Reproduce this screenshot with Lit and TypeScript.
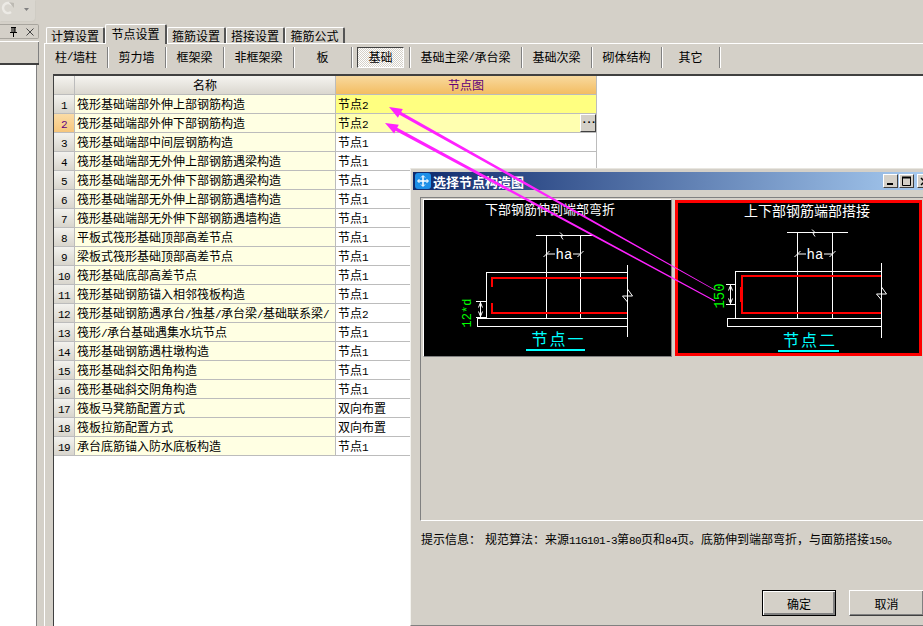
import { LitElement, html, css, svg } from 'lit';
import { customElement } from 'lit/decorators.js';

// wrap ascii runs so they get the narrow 6px latin, the CJK stays at 12px
const mixed = (text: string) =>
    text.split(/([\x21-\x7e]+)/).map((part, i) => (i % 2 ? html`<span class="latin">${part}</span>` : part));

const ROWS = [
    ['筏形基础端部外伸上部钢筋构造', '节点2'],
    ['筏形基础端部外伸下部钢筋构造', '节点2'],
    ['筏形基础端部中间层钢筋构造', '节点1'],
    ['筏形基础端部无外伸上部钢筋遇梁构造', '节点1'],
    ['筏形基础端部无外伸下部钢筋遇梁构造', '节点1'],
    ['筏形基础端部无外伸上部钢筋遇墙构造', '节点1'],
    ['筏形基础端部无外伸下部钢筋遇墙构造', '节点1'],
    ['平板式筏形基础顶部高差节点', '节点1'],
    ['梁板式筏形基础顶部高差节点', '节点1'],
    ['筏形基础底部高差节点', '节点1'],
    ['筏形基础钢筋锚入相邻筏板构造', '节点1'],
    ['筏形基础钢筋遇承台/独基/承台梁/基础联系梁/', '节点2'],
    ['筏形/承台基础遇集水坑节点', '节点1'],
    ['筏形基础钢筋遇柱墩构造', '节点1'],
    ['筏形基础斜交阳角构造', '节点1'],
    ['筏形基础斜交阴角构造', '节点1'],
    ['筏板马凳筋配置方式', '双向布置'],
    ['筏板拉筋配置方式', '双向布置'],
    ['承台底筋锚入防水底板构造', '节点1'],
];

const TABS: [string, number][] = [
    ['计算设置', 59], ['节点设置', 62], ['箍筋设置', 59], ['搭接设置', 59], ['箍筋公式', 60],
];

const TOOLS_LEFT: [string, number][] = [
    ['柱/墙柱', 63], ['剪力墙', 58], ['框架梁', 58], ['非框架梁', 70], ['板', 58],
];
const TOOLS_RIGHT: [string, number][] = [
    ['基础主梁/承台梁', 112], ['基础次梁', 70], ['砌体结构', 70], ['其它', 58],
];

// tapered arrow: tip at (x1,y1), tail at (x2,y2)
const arrow = (x1: number, y1: number, x2: number, y2: number) => {
    const len = Math.hypot(x2 - x1, y2 - y1);
    const ux = (x2 - x1) / len, uy = (y2 - y1) / len;
    const nx = -uy, ny = ux;
    const head = 13;
    const bx = x1 + ux * head, by = y1 + uy * head;
    const p = (x: number, y: number) => `${x.toFixed(1)},${y.toFixed(1)}`;
    const pts = [
        p(x1, y1),
        p(bx + nx * 5, by + ny * 5),
        p(bx + nx * 1.7, by + ny * 1.7),
        p(x2 + nx * 0.4, y2 + ny * 0.4),
        p(x2 - nx * 0.4, y2 - ny * 0.4),
        p(bx - nx * 1.7, by - ny * 1.7),
        p(bx - nx * 5, by - ny * 5),
    ];
    return svg`<polygon points=${pts.join(' ')} fill="#ff22ff"></polygon>`;
};

interface Detail {
    title: string; titleX: number; titleY: number; titleSize: number;
    topY: number; topL: number; topR: number; tickX: number;
    v1: number; v2: number; haX: number; haY: number;
    boxL: number; boxT: number; right: number; boxB: number; baseL: number; baseB: number;
    rightT: number; rightB: number;
    dimX: number; dimT: number; dimB: number;
    label: string; labelX: number; labelY: number; labelSize: number;
    node: string; nodeX: number; nodeY: number; ulL: number; ulR: number; ulY: number;
    red: string; redThick?: string;
}

const drawDetail = (d: Detail) => svg`
    <text x=${d.titleX} y=${d.titleY} text-anchor="middle" fill="#fff" font-size=${d.titleSize}>${d.title}</text>
    <g stroke="#fff" stroke-width="1" fill="none" shape-rendering="crispEdges">
        <path d="M${d.topL} ${d.topY}H${d.topR}M${d.v1} ${d.topY}V${d.boxB}M${d.v2} ${d.topY}V${d.boxB}"></path>
        <rect x=${d.boxL} y=${d.boxT} width=${d.right - d.boxL} height=${d.boxB - d.boxT}></rect>
        <rect x=${d.baseL} y=${d.boxB} width=${d.right - d.baseL} height=${d.baseB - d.boxB}></rect>
        <path d="M${d.right} ${d.rightT}V${d.rightB}"></path>
        <path d="M${d.dimX} ${d.dimT}V${d.dimB}M${d.dimX - 5} ${d.dimT}H${d.dimX + 5}M${d.dimX - 5} ${d.dimB}H${d.dimX + 5}"></path>
    </g>
    <g stroke="#fff" stroke-width="1" fill="none">
        <path d="M${d.tickX - 2} ${d.topY - 3}L${d.tickX + 1} ${d.topY}L${d.tickX - 1} ${d.topY + 1}L${d.tickX + 1} ${d.topY + 4}"></path>
        <path d="M${d.v1 - 3} ${d.haY + 3}L${d.v1 + 3} ${d.haY - 3}M${d.v2 - 3} ${d.haY + 3}L${d.v2 + 3} ${d.haY - 3}"></path>
        <path d="M${d.v1} ${d.haY}H${d.haX - 9}M${d.haX + 9} ${d.haY}H${d.v2}"></path>
        <path d="M${d.right - 5} ${d.rightT + 31}L${d.right + 5} ${d.rightT + 31}L${d.right} ${d.rightT + 24}M${d.right - 5} ${d.rightT + 31}L${d.right} ${d.rightT + 37}"></path>
        <path d="M${d.dimX - 2} ${d.dimT + 6}L${d.dimX} ${d.dimT + 1}L${d.dimX + 2} ${d.dimT + 6}M${d.dimX - 2} ${d.dimB - 6}L${d.dimX} ${d.dimB - 1}L${d.dimX + 2} ${d.dimB - 6}"></path>
    </g>
    <text x=${d.haX} y=${d.haY + 5} text-anchor="middle" fill="#fff" font-size="14" font-family="Liberation Mono, monospace">ha</text>
    <path d=${d.red} stroke="#ff0000" stroke-width="2" fill="none" shape-rendering="crispEdges"></path>
    ${d.redThick ? svg`<path d=${d.redThick} stroke="#ff0000" stroke-width="3" fill="none" shape-rendering="crispEdges"></path>` : ''}
    <text transform="translate(${d.labelX} ${d.labelY}) rotate(-90)" x="0" y="0" text-anchor="middle" dominant-baseline="central"
        fill="#00ff00" font-size=${d.labelSize} font-family="Liberation Mono, monospace">${d.label}</text>
    <text x=${d.nodeX} y=${d.nodeY} text-anchor="middle" fill="#00ffff" font-size="16" letter-spacing="2">${d.node}</text>
    <path d="M${d.ulL} ${d.ulY}H${d.ulR}" stroke="#00ffff" stroke-width="2" shape-rendering="crispEdges"></path>
`;

const DETAIL_ONE: Detail = {
    title: '下部钢筋伸到端部弯折', titleX: 127, titleY: 15, titleSize: 13,
    topY: 36.5, topL: 113, topR: 170, tickX: 139,
    v1: 123.5, v2: 157.5, haX: 141, haY: 55,
    boxL: 63.5, boxT: 73.5, right: 204.5, boxB: 119.5, baseL: 54.5, baseB: 127.5,
    rightT: 66, rightB: 138,
    dimX: 57.5, dimT: 102.5, dimB: 118.5,
    label: '12*d', labelX: 45, labelY: 114, labelSize: 12,
    node: '节点一', nodeX: 135.5, nodeY: 146, ulL: 103, ulR: 162, ulY: 151,
    red: 'M69 88V79H204M69 104V114H204',
};

const DETAIL_TWO: Detail = {
    title: '上下部钢筋端部搭接', titleX: 132, titleY: 16, titleSize: 14,
    topY: 32.5, topL: 112, topR: 173, tickX: 139,
    v1: 122.5, v2: 157.5, haX: 140, haY: 54,
    boxL: 60.5, boxT: 71.5, right: 206.5, boxB: 118.5, baseL: 52.5, baseB: 126.5,
    rightT: 63, rightB: 138,
    dimX: 55.5, dimT: 84.5, dimB: 104.5,
    label: '150', labelX: 44.5, labelY: 96, labelSize: 14,
    node: '节点二', nodeX: 135, nodeY: 146, ulL: 103, ulR: 164, ulY: 151,
    red: 'M206 76H67V113H206', redThick: 'M66.5 87V102',
};

@customElement('app-root')
export class AppRoot extends LitElement {
    static styles = css`
    :host {
        display: block;
        width: 923px;
        height: 626px;
        position: relative;
        overflow: hidden;
        background: #d4d0c8;
        color: #000;
        font-family: "Noto Sans CJK SC", sans-serif;
        font-size: 12px;
    }

    .latin {
        font-family: "Liberation Mono", monospace;
        font-size: 11px;
        letter-spacing: -0.6px;
    }

    .quick {
        height: 24px;
    }

    .quick-bar {
        width: 35px;
        height: 21px;
        background: #d9d6cf;
        border-radius: 0 0 4px 0;
        box-shadow: 1px 1px 0 #cfccc4;
    }

    .quick-bar svg {
        display: block;
    }

    .body {
        display: flex;
        height: 602px;
    }

    .dock {
        width: 39px;
        flex: none;
        display: flex;
        flex-direction: column;
    }

    .dock-head {
        height: 15px;
        border: 1px solid #a8a59e;
        border-left: none;
        border-radius: 0 2px 2px 0;
        display: flex;
        align-items: center;
        justify-content: flex-end;
        gap: 8px;
        padding-right: 4px;
        box-sizing: border-box;
    }

    .dock-tab {
        margin-top: 2px;
        height: 24px;
        border-top: 1px solid #fff;
        border-bottom: 2px solid #404040;
        box-shadow: inset -1px 0 0 #808080;
        box-sizing: border-box;
    }

    .dock-list {
        flex: 1;
        background: #fff;
        margin-right: 2px;
        border-right: 1px solid #808080;
    }

    .main {
        flex: 1;
        padding-left: 5px;
        display: flex;
        flex-direction: column;
        min-width: 0;
    }

    .tabs {
        height: 19px;
        display: flex;
        align-items: flex-end;
        padding-left: 2px;
    }

    .tab {
        height: 16px;
        line-height: 16px;
        text-align: center;
        border: 1px solid #fff;
        border-bottom: none;
        border-right: 2px solid #555;
        border-radius: 2px 2px 0 0;
        box-sizing: border-box;
        flex: none;
    }

    .tab.on {
        height: 20px;
        line-height: 18px;
        margin-bottom: -1px;
        background: #d4d0c8;
        position: relative;
    }

    .page {
        flex: 1;
        border-top: 1px solid #fff;
        border-left: 1px solid #fff;
        padding-top: 3px;
        display: flex;
        flex-direction: column;
        min-height: 0;
    }

    .tools {
        height: 21px;
        display: flex;
        align-items: stretch;
    }

    .tool {
        display: flex;
        align-items: center;
        justify-content: center;
        box-sizing: border-box;
        padding-bottom: 2px;
        border-right: 1px solid #808080;
        box-shadow: 1px 0 0 #fff;
        flex: none;
    }

    .tool.pressed {
        width: 47px;
        margin-left: 5px;
        border: 1px solid;
        border-color: #404040 #fff #fff #404040;
        box-shadow: none;
        background: repeating-conic-gradient(#fff 0 25%, #d4d0c8 0 50%) 0 0 / 2px 2px;
    }

    .tool-sep {
        width: 1px;
        margin-left: 5px;
        flex: none;
        background: #808080;
        box-shadow: 1px 0 0 #fff;
    }

    .grid {
        flex: 1;
        margin: 6px 0 0 8px;
        background: #fff;
        border-top: 2px solid #404040;
        border-left: 1px solid #404040;
    }

    .row {
        display: grid;
        grid-template-columns: 21px 261px 261px;
        height: 19px;
        line-height: 18px;
    }

    .row > div {
        box-sizing: border-box;
        border-right: 1px solid #bcbcbc;
        border-bottom: 1px solid #bcbcbc;
        padding-left: 2px;
        white-space: nowrap;
        overflow: hidden;
    }

    .row .idx {
        padding: 0;
        text-align: center;
        background: linear-gradient(#f3f2ee, #d8d5cd);
    }

    .row.current .idx {
        background: linear-gradient(#fbdca6, #f6c67c);
        color: #600080;
    }

    .row .name {
        background: #ffffe3;
    }

    .row .value {
        position: relative;
    }

    .row.first .value {
        background: #ffff80;
    }

    .row.current .value {
        background: #ffffb0;
    }

    .more {
        position: absolute;
        right: 0;
        top: 0;
        width: 16px;
        height: 18px;
        background: #d4d0c8;
        box-sizing: border-box;
        border: 1px solid;
        border-color: #fff #404040 #404040 #fff;
        font: bold 11px/11px "Liberation Mono", monospace;
        letter-spacing: -2px;
        text-align: center;
        color: #000;
    }

    .head {
        height: 19px;
    }

    .head .idx,
    .head .title {
        background: linear-gradient(#f5f4f0, #dad7cf);
        text-align: center;
        padding: 0;
    }

    .head .title.on {
        background: linear-gradient(#f8d99e, #f3bd62);
        color: #60007a;
    }

    .dialog {
        position: absolute;
        left: 410px;
        top: 168px;
        width: 540px;
        height: 458px;
        background: #d4d0c8;
        border-top: 1px solid #e8e6e0;
        border-left: 1px solid #f4f3ef;
        border-bottom: 1px solid #808080;
        box-sizing: border-box;
        padding: 3px 3px 0 2px;
        display: flex;
        flex-direction: column;
    }

    .caption {
        height: 18px;
        flex: none;
        display: flex;
        align-items: center;
        padding: 0 2px;
        width: 521px;
        box-sizing: border-box;
        background: linear-gradient(90deg, #0f2a6c, #a6caf0 98%);
        color: #fff;
        font-weight: 700;
        font-size: 13px;
    }

    .caption .label {
        margin-left: 2px;
    }

    .caption .grow {
        flex: 1;
    }

    .win-btn {
        width: 15px;
        height: 14px;
        margin-left: 1px;
        background: #d4d0c8;
        box-sizing: border-box;
        border: 1px solid;
        border-color: #fff #404040 #404040 #fff;
        display: flex;
        align-items: center;
        justify-content: center;
        flex: none;
    }

    .win-btn.close {
        margin-left: 3px;
    }

    .group {
        margin: 7px 0 0 7px;
        height: 324px;
        flex: none;
        box-sizing: border-box;
        border: 1px solid #808080;
        border-bottom-color: #fff;
        border-right: none;
        padding: 1px 0 0 2px;
        display: flex;
        gap: 3px;
        align-items: flex-start;
    }

    .shot {
        flex: none;
        background: #000;
        box-sizing: border-box;
    }

    .shot svg {
        display: block;
        overflow: visible;
    }

    .shot.plain {
        width: 249px;
        height: 158px;
        border: 1px solid;
        border-color: #fff #808080 #808080 #fff;
    }

    .shot.picked {
        width: 247px;
        height: 156px;
        margin-top: 1px;
        border: 3px solid #ff0000;
    }

    .hint {
        margin: 10px 0 0 8px;
        height: 15px;
        line-height: 15px;
        display: flex;
        gap: 4px;
        white-space: nowrap;
    }

    .actions {
        margin-top: auto;
        margin-bottom: 9px;
        display: flex;
        gap: 13px;
        padding-left: 349px;
    }

    .btn {
        width: 75px;
        height: 26px;
        flex: none;
        box-sizing: border-box;
        display: flex;
        align-items: center;
        justify-content: center;
        border: 1px solid;
        border-color: #fff #404040 #404040 #fff;
        box-shadow: inset -1px -1px 0 #808080;
    }

    .btn.default {
        width: 74px;
        border: 1px solid #000;
        box-shadow: inset 1px 1px 0 #fff, inset -2px -2px 0 #808080;
    }

    .arrows {
        position: absolute;
        left: 0;
        top: 0;
        pointer-events: none;
    }
    `;

    private renderRow(row: string[], i: number) {
        const classes = `row ${i === 0 ? 'first' : ''} ${i === 1 ? 'current' : ''}`;
        return html`
            <div class=${classes}>
                <div class="idx"><span class="latin">${i + 1}</span></div>
                <div class="name">${mixed(row[0])}</div>
                <div class="value">${mixed(row[1])}${i === 1 ? html`<div class="more">...</div>` : ''}</div>
            </div>
        `;
    }

    render() {
        return html`
            <div class="quick">
                <div class="quick-bar">
                    <svg width="35" height="21" viewBox="0 0 35 21">
                        <path d="M12 5A5 5 0 1 0 11 12" fill="none" stroke="#eceae5" stroke-width="2.500"></path>
                        <path d="M9 2l5 1v5z" fill="#bdbab3"></path>
                        <path d="M24 8h5l-2.500 3z" fill="#808080"></path>
                    </svg>
                </div>
            </div>
            <div class="body">
                <div class="dock">
                    <div class="dock-head">
                        <svg width="9" height="10" viewBox="0 0 9 10">
                            <path d="M2 0.500H7M3 1V5M6 1V5M5 1V5M1 5.500H8M4.500 6V10" stroke="#000" fill="none"></path>
                        </svg>
                        <svg width="8" height="8" viewBox="0 0 8 8">
                            <path d="M0.500 0.500L7.500 7.500M7.500 0.500L0.500 7.500" stroke="#444" fill="none"></path>
                        </svg>
                    </div>
                    <div class="dock-tab"></div>
                    <div class="dock-list"></div>
                </div>
                <div class="main">
                    <div class="tabs">
                        ${TABS.map(([t, w], i) => html`<div class="tab ${i === 1 ? 'on' : ''}" style="width:${w}px">${t}</div>`)}
                    </div>
                    <div class="page">
                        <div class="tools">
                            ${TOOLS_LEFT.map(([t, w]) => html`<div class="tool" style="width:${w}px">${mixed(t)}</div>`)}
                            <div class="tool pressed">基础</div>
                            <div class="tool-sep"></div>
                            ${TOOLS_RIGHT.map(([t, w]) => html`<div class="tool" style="width:${w}px">${mixed(t)}</div>`)}
                        </div>
                        <div class="grid">
                            <div class="row head">
                                <div class="idx"></div>
                                <div class="title">名称</div>
                                <div class="title on">节点图</div>
                            </div>
                            ${ROWS.map((r, i) => this.renderRow(r, i))}
                        </div>
                    </div>
                </div>
            </div>

            <div class="dialog">
                <div class="caption">
                    <svg width="16" height="16" viewBox="0 0 16 16">
                        <rect width="16" height="16" rx="3" fill="#1d8fe8"></rect>
                        <path d="M8 3V13M3 8H13" stroke="#fff" stroke-width="1.500"></path>
                        <path d="M6 4.500L8 2.500L10 4.500M6 11.500L8 13.500L10 11.500M4.500 6L2.500 8L4.500 10M11.500 6L13.500 8L11.500 10" stroke="#fff" fill="none"></path>
                    </svg>
                    <span class="label">选择节点构造图</span>
                    <span class="grow"></span>
                    <div class="win-btn">
                        <svg width="11" height="10" viewBox="0 0 11 10"><path d="M2 8H8" stroke="#000" stroke-width="2"></path></svg>
                    </div>
                    <div class="win-btn">
                        <svg width="11" height="10" viewBox="0 0 11 10"><path d="M1.500 1V9.500H9.500V1" stroke="#000" fill="none"></path><path d="M1 1.500H10" stroke="#000" stroke-width="2"></path></svg>
                    </div>
                    <div class="win-btn close">
                        <svg width="9" height="9" viewBox="0 0 9 9"><path d="M1 1L8 8M8 1L1 8" stroke="#000" stroke-width="1.500"></path></svg>
                    </div>
                </div>
                <div class="group">
                    <div class="shot plain">
                        <svg width="247" height="156" viewBox="1 1 247 156" font-family="Noto Sans CJK SC, sans-serif">${drawDetail(DETAIL_ONE)}</svg>
                    </div>
                    <div class="shot picked">
                        <svg width="241" height="150" viewBox="3 3 241 150" font-family="Noto Sans CJK SC, sans-serif">${drawDetail(DETAIL_TWO)}</svg>
                    </div>
                </div>
                <div class="hint">
                    <span>提示信息：</span>
                    <span>${mixed('规范算法：来源11G101-3第80页和84页。底筋伸到端部弯折，与面筋搭接150。')}</span>
                </div>
                <div class="actions">
                    <div class="btn default">确定</div>
                    <div class="btn">取消</div>
                </div>
            </div>

            <svg class="arrows" width="923" height="626" viewBox="0 0 923 626">
                ${arrow(389, 107, 715, 290)}
                ${arrow(385, 123, 715, 301)}
            </svg>
        `;
    }
}

declare global {
    interface HTMLElementTagNameMap {
        'app-root': AppRoot;
    }
}
